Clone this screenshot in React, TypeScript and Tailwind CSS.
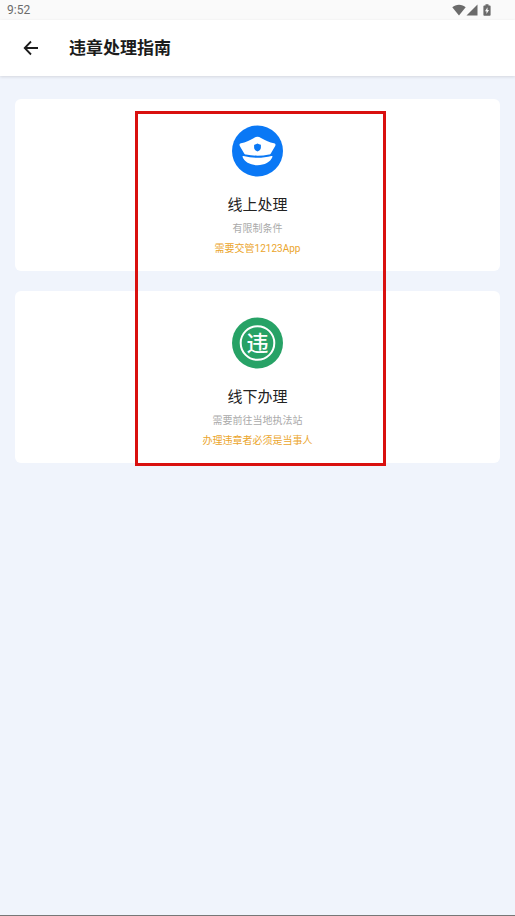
import type { ReactNode } from "react";

function StatusBar() {
  return (
    <div className="flex h-5 items-center justify-between bg-[#fafafa] pl-[7px] pr-6 text-[#6b6b6b]">
      <span className="text-[12px] leading-5">9:52</span>
      <div className="flex items-center">
        {/* Wifi */}
        <svg width="14" height="12" viewBox="0 0 14 12" fill="currentColor" aria-hidden="true">
          <path d="M7 11.5 0.3 3.3C2.1 1.7 4.4 0.8 7 0.8s4.9 0.9 6.7 2.5z" />
        </svg>
        {/* Signal */}
        <svg width="12" height="12" viewBox="0 0 12 12" fill="currentColor" aria-hidden="true">
          <path d="M11.5 0.5v11H0.5z" />
        </svg>
        {/* Battery */}
        <svg className="ml-[5px]" width="8" height="12" viewBox="0 0 8 12" fill="currentColor" aria-hidden="true">
          <path
            fillRule="evenodd"
            d="M2.5 0.3h3v1.2h1.3c.5 0 .8.3.8.8v8.6c0 .5-.3.8-.8.8H1.2c-.5 0-.8-.3-.8-.8V2.3c0-.5.3-.8.8-.8h1.3zM4.5 3.2 2 7.2h1.5v2.9L6 6.1H4.5z"
          />
        </svg>
      </div>
    </div>
  );
}

function PoliceCapIcon() {
  return (
    <svg width="51" height="52" viewBox="0 0 51 52" aria-hidden="true">
      <circle cx="25.5" cy="26" r="25.5" fill="#0a78f5" />
      <path
        fill="#fff"
        d="M25.500 11.800c1.200 0 2.200.4 3.500 1.100 4.500 2.600 8.500 4.400 13 5.400 1.400.3 1.900 1.400 1.200 2.600l-4.400 7.500c-.4.7-.9.9-1.700 1.100-7.600 1.600-15.600 1.600-23.200 0-.8-.2-1.300-.4-1.700-1.100l-4.400-7.500c-.7-1.200-.2-2.300 1.200-2.600 4.500-1 8.500-2.800 13-5.400 1.300-.7 2.300-1.100 3.500-1.100z"
      />
      <path
        fill="#0a78f5"
        d="M25.500 18.600c1 .7 2.200 1.100 3.400 1.200v2.700c0 1.900-1.300 3.200-3.400 4.100-2.100-.9-3.400-2.200-3.400-4.100v-2.700c1.200-.1 2.400-.5 3.400-1.200z"
      />
      <path
        fill="#fff"
        d="M11.500 31c9.200 2.400 18.800 2.400 28 0 .9-.2 1.200.3.900 1.100C38.400 37.200 32.500 40.200 25.500 40.200S12.600 37.200 10.600 32.100c-.3-.8 0-1.300.9-1.100z"
      />
    </svg>
  );
}

function ViolationIcon() {
  return (
    <svg width="51" height="52" viewBox="0 0 51 52" aria-hidden="true">
      <circle cx="25.5" cy="26" r="25.5" fill="#27a266" />
      <circle cx="25.5" cy="26" r="16.800" fill="none" stroke="#fff" strokeWidth="2" />
      <text
        x="25.5"
        y="34"
        textAnchor="middle"
        fill="#fff"
        className="text-[22px] font-medium"
      >
        违
      </text>
    </svg>
  );
}

type GuideCardProps = {
  icon: ReactNode;
  title: string;
  description: string;
  note: string;
};

function GuideCard({ icon, title, description, note }: GuideCardProps) {
  return (
    <button
      type="button"
      className="flex w-full flex-col items-center rounded-md bg-white pt-[26px] pb-[13px]"
    >
      {icon}
      <span className="mt-4 text-[15px] leading-6 text-[#222]">{title}</span>
      <span className="mt-[2px] text-[10px] leading-5 text-[#aaa]">{description}</span>
      <span className="text-[10px] leading-[19px] text-[#eba52c]">{note}</span>
    </button>
  );
}

export default function App() {
  return (
    <div className="flex min-h-screen flex-col border-b border-[#777] bg-[#f0f4fc] font-[Roboto,'Noto_Sans_CJK_SC',sans-serif]">
      <StatusBar />

      <header className="flex h-14 items-center bg-white pl-[23px] shadow-[0_1px_3px_rgba(0,0,0,0.12)]">
        <button type="button" aria-label="返回">
          <svg
            width="16"
            height="16"
            viewBox="0 0 16 16"
            fill="none"
            stroke="#1c1c1c"
            strokeWidth="1.800"
            aria-hidden="true"
          >
            <path d="M15 8H2M8 1.500 1.700 8 8 14.500" />
          </svg>
        </button>
        <h1 className="ml-[30px] text-[17px] font-bold leading-6 text-[#1c1c1c]">违章处理指南</h1>
      </header>

      <main className="relative flex flex-col gap-5 px-[15px] pt-[23px]">
        <GuideCard
          icon={<PoliceCapIcon />}
          title="线上处理"
          description="有限制条件"
          note="需要交管12123App"
        />
        <GuideCard
          icon={<ViolationIcon />}
          title="线下办理"
          description="需要前往当地执法站"
          note="办理违章者必须是当事人"
        />

        {/* Highlight around both options */}
        <div className="pointer-events-none absolute top-[35px] left-[135px] h-[355px] w-[251px] border-3 border-[#d9100f]" />
      </main>
    </div>
  );
}
